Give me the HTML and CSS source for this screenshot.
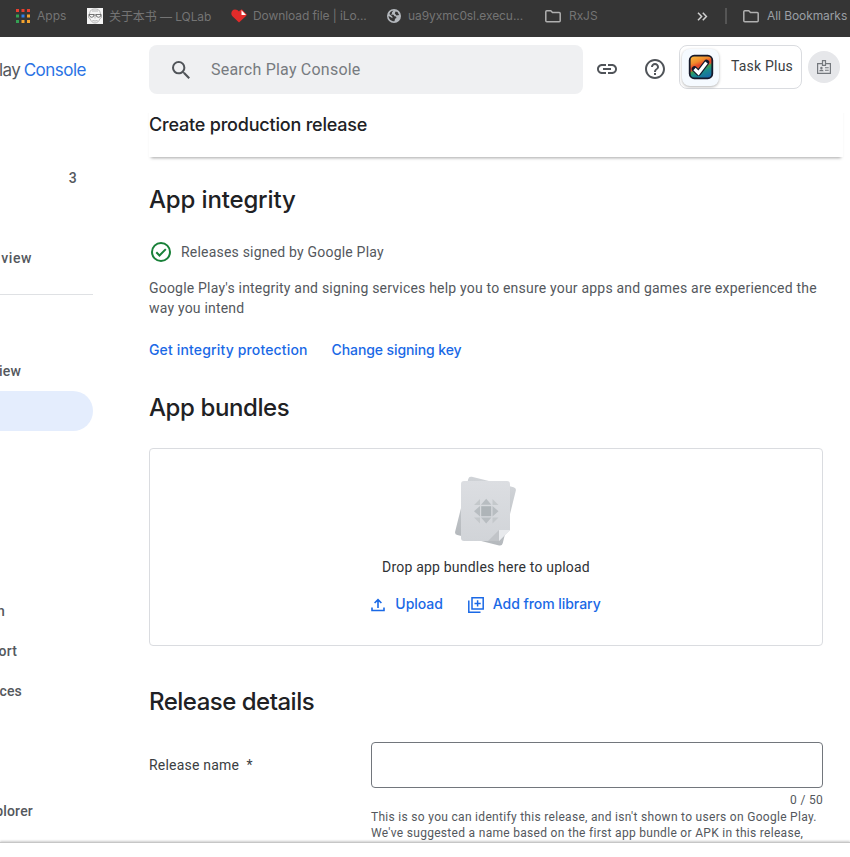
FILE: index.html
```html
<!DOCTYPE html>
<html lang="en">
<head>
<meta charset="utf-8">
<title>Create production release</title>
<link rel="stylesheet" href="styles.css">
</head>
<body>
<div class="bookmarks">
  <div class="bm bm-apps">
    <svg width="14" height="14" viewBox="0 0 14 14"><path fill="#e8402f" d="M0 0h3v3H0zM5.500 0h3v3h-3zM11 0h3v3h-3z"/><path fill="#34a153" d="M0 5.500h3v3H0zM0 11h3v3H0z"/><path fill="#2f7de8" d="M5.500 5.500h3v3h-3z"/><path fill="#f3a32e" d="M11 5.500h3v3h-3zM5.500 11h3v3h-3zM11 11h3v3h-3z"/></svg>
    <span class="t-apps">Apps</span>
  </div>
  <div class="bm bm-lq">
    <svg width="16" height="16" viewBox="0 0 16 16"><path fill="#f4f4f4" d="M0 0h16v16H0z"/><path fill="none" stroke="#999" stroke-width=".7" d="M2.500 6C3 2 5 1 8 1s5 1 5.500 5M1.500 6.500v3l1.500 1c1 3 3 4.500 5 4.500s4-1.500 5-4.500l1.500-1v-3M5 3h6M5.500 12.500q2.500 1 5 0M8 8v2.500"/><path fill="none" stroke="#555" stroke-width=".8" d="M2 6.500h5q0 2.800-2.200 2.800T2 6.500zM9 6.500h5q0 2.800-2.500 2.800T9 6.500zM7 7h2"/></svg>
    <span class="t-lq">关于本书 — LQLab</span>
  </div>
  <div class="bm bm-dl">
    <svg width="16" height="14" viewBox="0 0 16 14"><path fill="#e12b2a" d="M8 13.500 1.200 7C-.8 4.500.8.500 4 .500c1.800 0 3 .8 4 2C9 1 10.200.500 11 .500l4.800 5c-.3.700-.5 1.200-1 1.700z"/><path fill="#fff" d="M10.500 1.200 15 6h-4.500z"/></svg>
    <span class="t-dl">Download file | iLo...</span>
  </div>
  <div class="bm bm-ua">
    <svg width="14" height="14" viewBox="0 0 14 14"><circle cx="7" cy="7" r="7" fill="#b4b8bd"/><path fill="#353535" d="M6.500 1.600 5 3.200v1.300L3.800 5.600l2.700.2 1 1.500 1.500.2.500 1.500-1.500.8-.5 2.500C4 12.500 1.600 9.800 1.600 7L4 8.200l1.500 1L5.300 7.600 2.400 5.100C3.200 3 4.500 2 6.500 1.600zM8.500 2.500l2 .5 1.700 3-2.700.5-1.700-2z"/></svg>
    <span class="t-ua">ua9yxmc0sl.execu...</span>
  </div>
  <div class="bm bm-rx">
    <svg width="16" height="13" viewBox="0 0 16 13"><path fill="none" stroke="#b0b0b0" stroke-width="1.500" d="M.8 10.800V1.800q0-1 1-1h4l1.700 1.700h6.700q1 0 1 1v7.300q0 1-1 1H1.800q-1 0-1-1z"/></svg>
    <span class="t-rx">RxJS</span>
  </div>
  <svg class="bm-more" width="11" height="9" viewBox="0 0 11 9"><path fill="none" stroke="#d0d0d0" stroke-width="1.500" d="m1 .8 3.600 3.700L1 8.200M5.800.8l3.600 3.700-3.600 3.700"/></svg>
  <i class="bm-sep"></i>
  <div class="bm bm-all">
    <svg width="16" height="13" viewBox="0 0 16 13"><path fill="none" stroke="#b0b0b0" stroke-width="1.500" d="M.8 10.800V1.800q0-1 1-1h4l1.700 1.700h6.700q1 0 1 1v7.300q0 1-1 1H1.800q-1 0-1-1z"/></svg>
    <span class="t-all">All Bookmarks</span>
  </div>
</div>

<div class="app">
  <aside class="side">
    <div class="brand"><span>lay <b>Console</b></span></div>
    <nav>
      <div class="nav count"><span>3</span></div>
      <div class="nav"></div>
      <div class="nav w-view"><span>view</span></div>
      <hr>
      <div class="nav"></div>
      <div class="nav w-iew"><span>iew</span></div>
      <div class="nav active"></div>
      <div class="nav"></div>
      <div class="nav"></div>
      <div class="nav"></div>
      <div class="nav"></div>
      <div class="nav w-n"><span>n</span></div>
      <div class="nav w-ort"><span>ort</span></div>
      <div class="nav w-ces"><span>ces</span></div>
      <div class="nav"></div>
      <div class="nav"></div>
      <div class="nav w-plorer"><span>plorer</span></div>
    </nav>
  </aside>

  <main class="main">
    <header class="top">
      <div class="search">
        <svg width="18" height="18" viewBox="3 3 17.500 17.500"><path fill="#505459" d="M15.500 14h-.79l-.28-.27A6.471 6.471 0 0 0 16 9.500 6.500 6.500 0 1 0 9.500 16c1.610 0 3.090-.59 4.230-1.570l.27.28v.79l5 4.990L20.490 19l-4.990-5zm-6 0C7.010 14 5 11.990 5 9.500S7.010 5 9.500 5 14 7.010 14 9.500 11.990 14 9.500 14z"/></svg>
        <span>Search Play Console</span>
      </div>
      <svg class="link" width="24" height="24" viewBox="0 0 24 24"><path fill="#505459" d="M3.900 12c0-1.710 1.390-3.100 3.100-3.100h4V7H7c-2.760 0-5 2.240-5 5s2.240 5 5 5h4v-1.900H7c-1.710 0-3.100-1.390-3.100-3.100zM8 13h8v-2H8v2zm9-6h-4v1.900h4c1.710 0 3.100 1.390 3.100 3.100s-1.390 3.100-3.100 3.100h-4V17h4c2.760 0 5-2.240 5-5s-2.240-5-5-5z"/></svg>
      <svg class="help" width="24" height="24" viewBox="0 0 24 24"><path fill="#505459" d="M11 18h2v-2h-2v2zm1-16C6.480 2 2 6.480 2 12s4.480 10 10 10 10-4.480 10-10S17.520 2 12 2zm0 18c-4.410 0-8-3.590-8-8s3.590-8 8-8 8 3.590 8 8-3.590 8-8 8zm0-14c-2.210 0-4 1.790-4 4h2c0-1.100.9-2 2-2s2 .9 2 2c0 2-3 1.750-3 5h2c0-2.250 3-2.500 3-5 0-2.210-1.790-4-4-4z"/></svg>
      <div class="chip">
        <div class="appicon">
          <svg width="26" height="26" viewBox="0 0 26 26"><defs><linearGradient id="rb" x1=".3" y1="0" x2=".7" y2="1"><stop offset="0" stop-color="#f8b13c"/><stop offset=".25" stop-color="#f08a2c"/><stop offset=".4" stop-color="#e6452b"/><stop offset=".5" stop-color="#d8562f"/><stop offset=".56" stop-color="#3fa04e"/><stop offset=".7" stop-color="#1b8d8a"/><stop offset="1" stop-color="#1769a8"/></linearGradient></defs><rect x="1.700" y="1.700" width="22.600" height="22.600" rx="4.500" fill="url(#rb)" stroke="#15192b" stroke-width="1.800"/><path d="m6.500 15 4 4L18.500 8.500" fill="none" stroke="#11182b" stroke-width="5.500" stroke-linejoin="round" stroke-linecap="round"/><path d="m6.500 15 4 4L18.500 8.500" fill="none" stroke="#fff" stroke-width="3.200"/></svg>
        </div>
        <span>Task Plus</span>
      </div>
      <div class="avatar">
        <svg width="14" height="14" viewBox="0 0 14 14"><path fill="none" stroke="#74787d" stroke-width="1.200" d="M5.500 3.600H.6v9.800h12.800V3.600H8.500M5.500.6h3v4.800h-3z"/><path fill="#74787d" d="M2.200 11.200q0-1.700 2.200-1.700t2.200 1.700zM8 7.300h3.700v1H8zM8 9.800h3.700v1H8z"/><circle cx="4.400" cy="8" r="1.200" fill="#74787d"/></svg>
      </div>
    </header>

    <div class="titlebar"><h1>Create production release</h1></div>

    <section class="content">
      <h2 class="h-integrity">App integrity</h2>
      <p class="signed">
        <svg width="20" height="20" viewBox="0 0 20 20"><circle cx="10" cy="10" r="9" fill="none" stroke="#188038" stroke-width="2"/><path d="m5.300 10.300 3.200 3.200 6.300-6.400" fill="none" stroke="#188038" stroke-width="2"/></svg>
        <span>Releases signed by Google Play</span>
      </p>
      <p class="desc">Google Play's integrity and signing services help you to ensure your apps and games are experienced the<br>way you intend</p>
      <div class="links"><a class="l1">Get integrity protection</a><a class="l2">Change signing key</a></div>
      <h2 class="h-bundles">App bundles</h2>
      <div class="drop">
        <svg class="art" width="64" height="72" viewBox="0 0 64 72">
          <defs><linearGradient id="back" x1="0" y1="0" x2="0" y2="1"><stop offset="0" stop-color="#d0d3d7"/><stop offset="1" stop-color="#b5b9bd"/></linearGradient><linearGradient id="front" x1="0" y1="0" x2="0" y2="1"><stop offset="0" stop-color="#dcdee2"/><stop offset="1" stop-color="#d1d4d8"/></linearGradient></defs>
          <rect x="8" y="7" width="49" height="60" rx="3" fill="url(#back)" transform="rotate(14 32 37)"/>
          <path fill="url(#front)" d="M11 7h43q3 0 3 3v46L46 67H11q-3 0-3-3V10q0-3 3-3z"/>
          <path fill="#c1c4c8" d="M46 56v11H35z"/><path fill="#e8eaed" d="M46 56h11L46 67z"/>
          <g fill="#b8bdc1"><path d="M28.200 32.200h10v10h-10z" fill="#aeb4b8"/><path d="m28 30.800 5.200-6 5.200 6zM28 43.500l5.200 6 5.200-6zM27 32l-6 5.200 6 5.200zM39.500 32l6 5.200-6 5.200z"/><path fill="#c4c8cb" d="M27 25v6h-6zM39.500 25v6h6zM27 49.500v-6h-6zM39.500 49.500v-6h6z"/></g>
        </svg>
        <div class="droptext">Drop app bundles here to upload</div>
        <div class="actions">
          <svg width="14" height="14" viewBox="0 0 14 14"><path fill="none" stroke="#1a69e6" stroke-width="1.600" d="M1 9.500v3h12v-3M7 10V2M3.600 5 7 1.600 10.400 5"/></svg>
          <span class="up">Upload</span>
          <svg class="lib" width="16" height="16" viewBox="0 0 16 16"><path fill="none" stroke="#1a69e6" stroke-width="1.500" d="M4 .8h11.200v11.200H4zM.8 3.500v11.700h11.700M9.600 3.300v6.200M6.500 6.400h6.200"/></svg>
          <span class="add">Add from library</span>
        </div>
      </div>
      <h2 class="h-details">Release details</h2>
      <div class="field">
        <label>Release name&nbsp; *</label>
        <div class="control">
          <div class="input"></div>
          <div class="counter">0 / 50</div>
          <p class="hint"><span class="h1l">This is so you can identify this release, and isn't shown to users on Google Play.</span><br><span class="h2l">We've suggested a name based on the first app bundle or APK in this release,</span></p>
        </div>
      </div>
    </section>
  </main>
</div>
<footer class="bottom"></footer>
</body>
</html>
```

FILE: styles.css
```css
* { box-sizing: border-box; }
html, body { margin: 0; height: 857px; overflow: hidden; }
body { display: flex; flex-direction: column; background: #fff; font-family: Roboto, "Noto Sans CJK SC", sans-serif; font-size: 14px; color: #54585d; }
svg { display: block; flex: none; }
h1, h2, p { margin: 0; }
span, a, label { white-space: nowrap; }

.bookmarks { flex: none; display: flex; align-items: center; height: 37px; padding: 0 0 5px 16px; background: #353535; color: #747474; font-family: Inter, "Noto Sans CJK SC", sans-serif; font-size: 12px; letter-spacing: -.08px; }
.bm { display: flex; align-items: center; flex: none; }
.bm span { margin-top: -2px; }
.bm-apps { width: 71px; gap: 7px; letter-spacing: 0; }
.bm-lq { width: 144px; gap: 6px; }
.bm-dl { width: 156px; gap: 6px; }
.bm-ua { width: 158px; gap: 7px; }
.bm-rx { width: 152px; gap: 8px; }
.bm-more { margin-right: 17px; }
.bm-sep { width: 2px; height: 16px; background: #555; margin-right: 16px; }
.bm-all { gap: 8px; color: #9a9fa4; }

.app { display: flex; height: 805px; flex: none; overflow: hidden; }
.side { width: 149px; flex: none; overflow: hidden; }
.brand { display: flex; justify-content: flex-end; align-items: center; height: 65px; width: 86px; margin-bottom: 56px; font-family: Inter, sans-serif; font-size: 17px; letter-spacing: -.5px; word-spacing: -1px; color: #54585d; }
.brand b { font-weight: 400; color: #2a73e4; }
.nav { display: flex; align-items: center; justify-content: flex-end; height: 40px; font-weight: 500; letter-spacing: .2px; }
.side hr { width: 93px; height: 1px; border: 0; background: #dfe1e4; margin: 16px 0; }
.count { width: 77px; }
.w-view { width: 32px; letter-spacing: .6px; }
.w-iew { width: 21px; }
.w-n { width: 5px; }
.w-ort { width: 17px; }
.w-ces { width: 22px; }
.w-plorer { width: 33px; }
.active { width: 93px; background: #e4edfd; border-radius: 0 20px 20px 0; }

.main { flex: 1; min-width: 0; }
.top { display: flex; align-items: center; height: 56px; padding-top: 8px; }
.search { display: flex; flex: none; align-items: center; width: 434px; height: 49px; margin-top: 1px; padding-left: 23px; gap: 21px; background: #eff0f2; border-radius: 8px; font-size: 16px; letter-spacing: .22px; color: #777b80; }
.link { margin-left: 12px; }
.help { margin-left: 24px; }
.chip { display: flex; align-items: center; width: 123px; height: 44px; margin: -4px 0 0 12px; padding-left: 2px; border: 1px solid #dadce0; border-radius: 8px; gap: 12px; color: #3b3e42; letter-spacing: .2px; }
.chip span { margin-top: -2px; }
.appicon { display: flex; align-items: center; justify-content: center; width: 37px; height: 37px; background: #f5faff; border-radius: 8px; box-shadow: 0 1px 3px rgba(0,0,0,.3); }
.avatar { display: flex; align-items: center; justify-content: center; width: 32px; height: 32px; margin: -4px 0 0 6px; border-radius: 50%; background: #e6e7ea; }

.titlebar { display: flex; align-items: center; width: 694px; height: 64px; padding-bottom: 1px; box-shadow: 0 3px 3px -2px rgba(0,0,0,.35); clip-path: inset(20px -4px -6px -4px); }
h1 { font: 500 18px/24px Inter, sans-serif; letter-spacing: -.2px; color: #202124; }
h2 { font: 500 24px/32px Inter, sans-serif; letter-spacing: -.5px; color: #202124; }
.content { width: 674px; }
.h-integrity { padding-top: 27px; letter-spacing: -.15px; }
.signed { display: flex; align-items: center; height: 20px; margin-top: 26px; padding-left: 2px; gap: 10px; letter-spacing: .2px; }
.desc { margin-top: 16px; line-height: 20px; white-space: nowrap; letter-spacing: .2px; }
.links { display: flex; gap: 24px; height: 20px; line-height: 20px; margin-top: 22px; color: #1a69e6; font-family: Inter, sans-serif; font-weight: 500; letter-spacing: -.1px; }
.l1 { letter-spacing: .15px; }
.h-bundles { margin-top: 32px; letter-spacing: -.4px; }
.drop { display: flex; flex-direction: column; align-items: center; height: 198px; margin-top: 24px; padding-top: 25px; border: 1px solid #dadce0; border-radius: 4px; }
.art { margin-left: -2px; }
.droptext { margin-top: 11px; line-height: 20px; color: #303235; letter-spacing: .2px; }
.actions { display: flex; align-items: center; height: 20px; margin-top: 18px; color: #1a69e6; font-family: Inter, sans-serif; font-weight: 500; letter-spacing: -.05px; }
.actions span { line-height: 20px; margin-top: -2px; }
.actions .up { margin-right: 25px; margin-left: 10px; }
.actions .add { margin-left: 9px; }
.h-details { margin-top: 40px; }
.field { display: flex; margin-top: 24px; }
.field label { width: 222px; line-height: 20px; padding-top: 13px; color: #3b3e42; letter-spacing: .2px; }
.control { width: 452px; }
.input { height: 46px; border: 1px solid #72767c; border-radius: 4px; }
.counter { margin-top: 4px; text-align: right; font-size: 12px; line-height: 16px; letter-spacing: .3px; }
.hint { font-size: 12px; line-height: 16px; padding-top: 1px; letter-spacing: .3px; }
.bottom { position: relative; height: 15px; flex: none; background: #fff; border-top: 1px solid #c6c6c6; box-shadow: 0 -1px 2px rgba(0,0,0,.2); }
```
